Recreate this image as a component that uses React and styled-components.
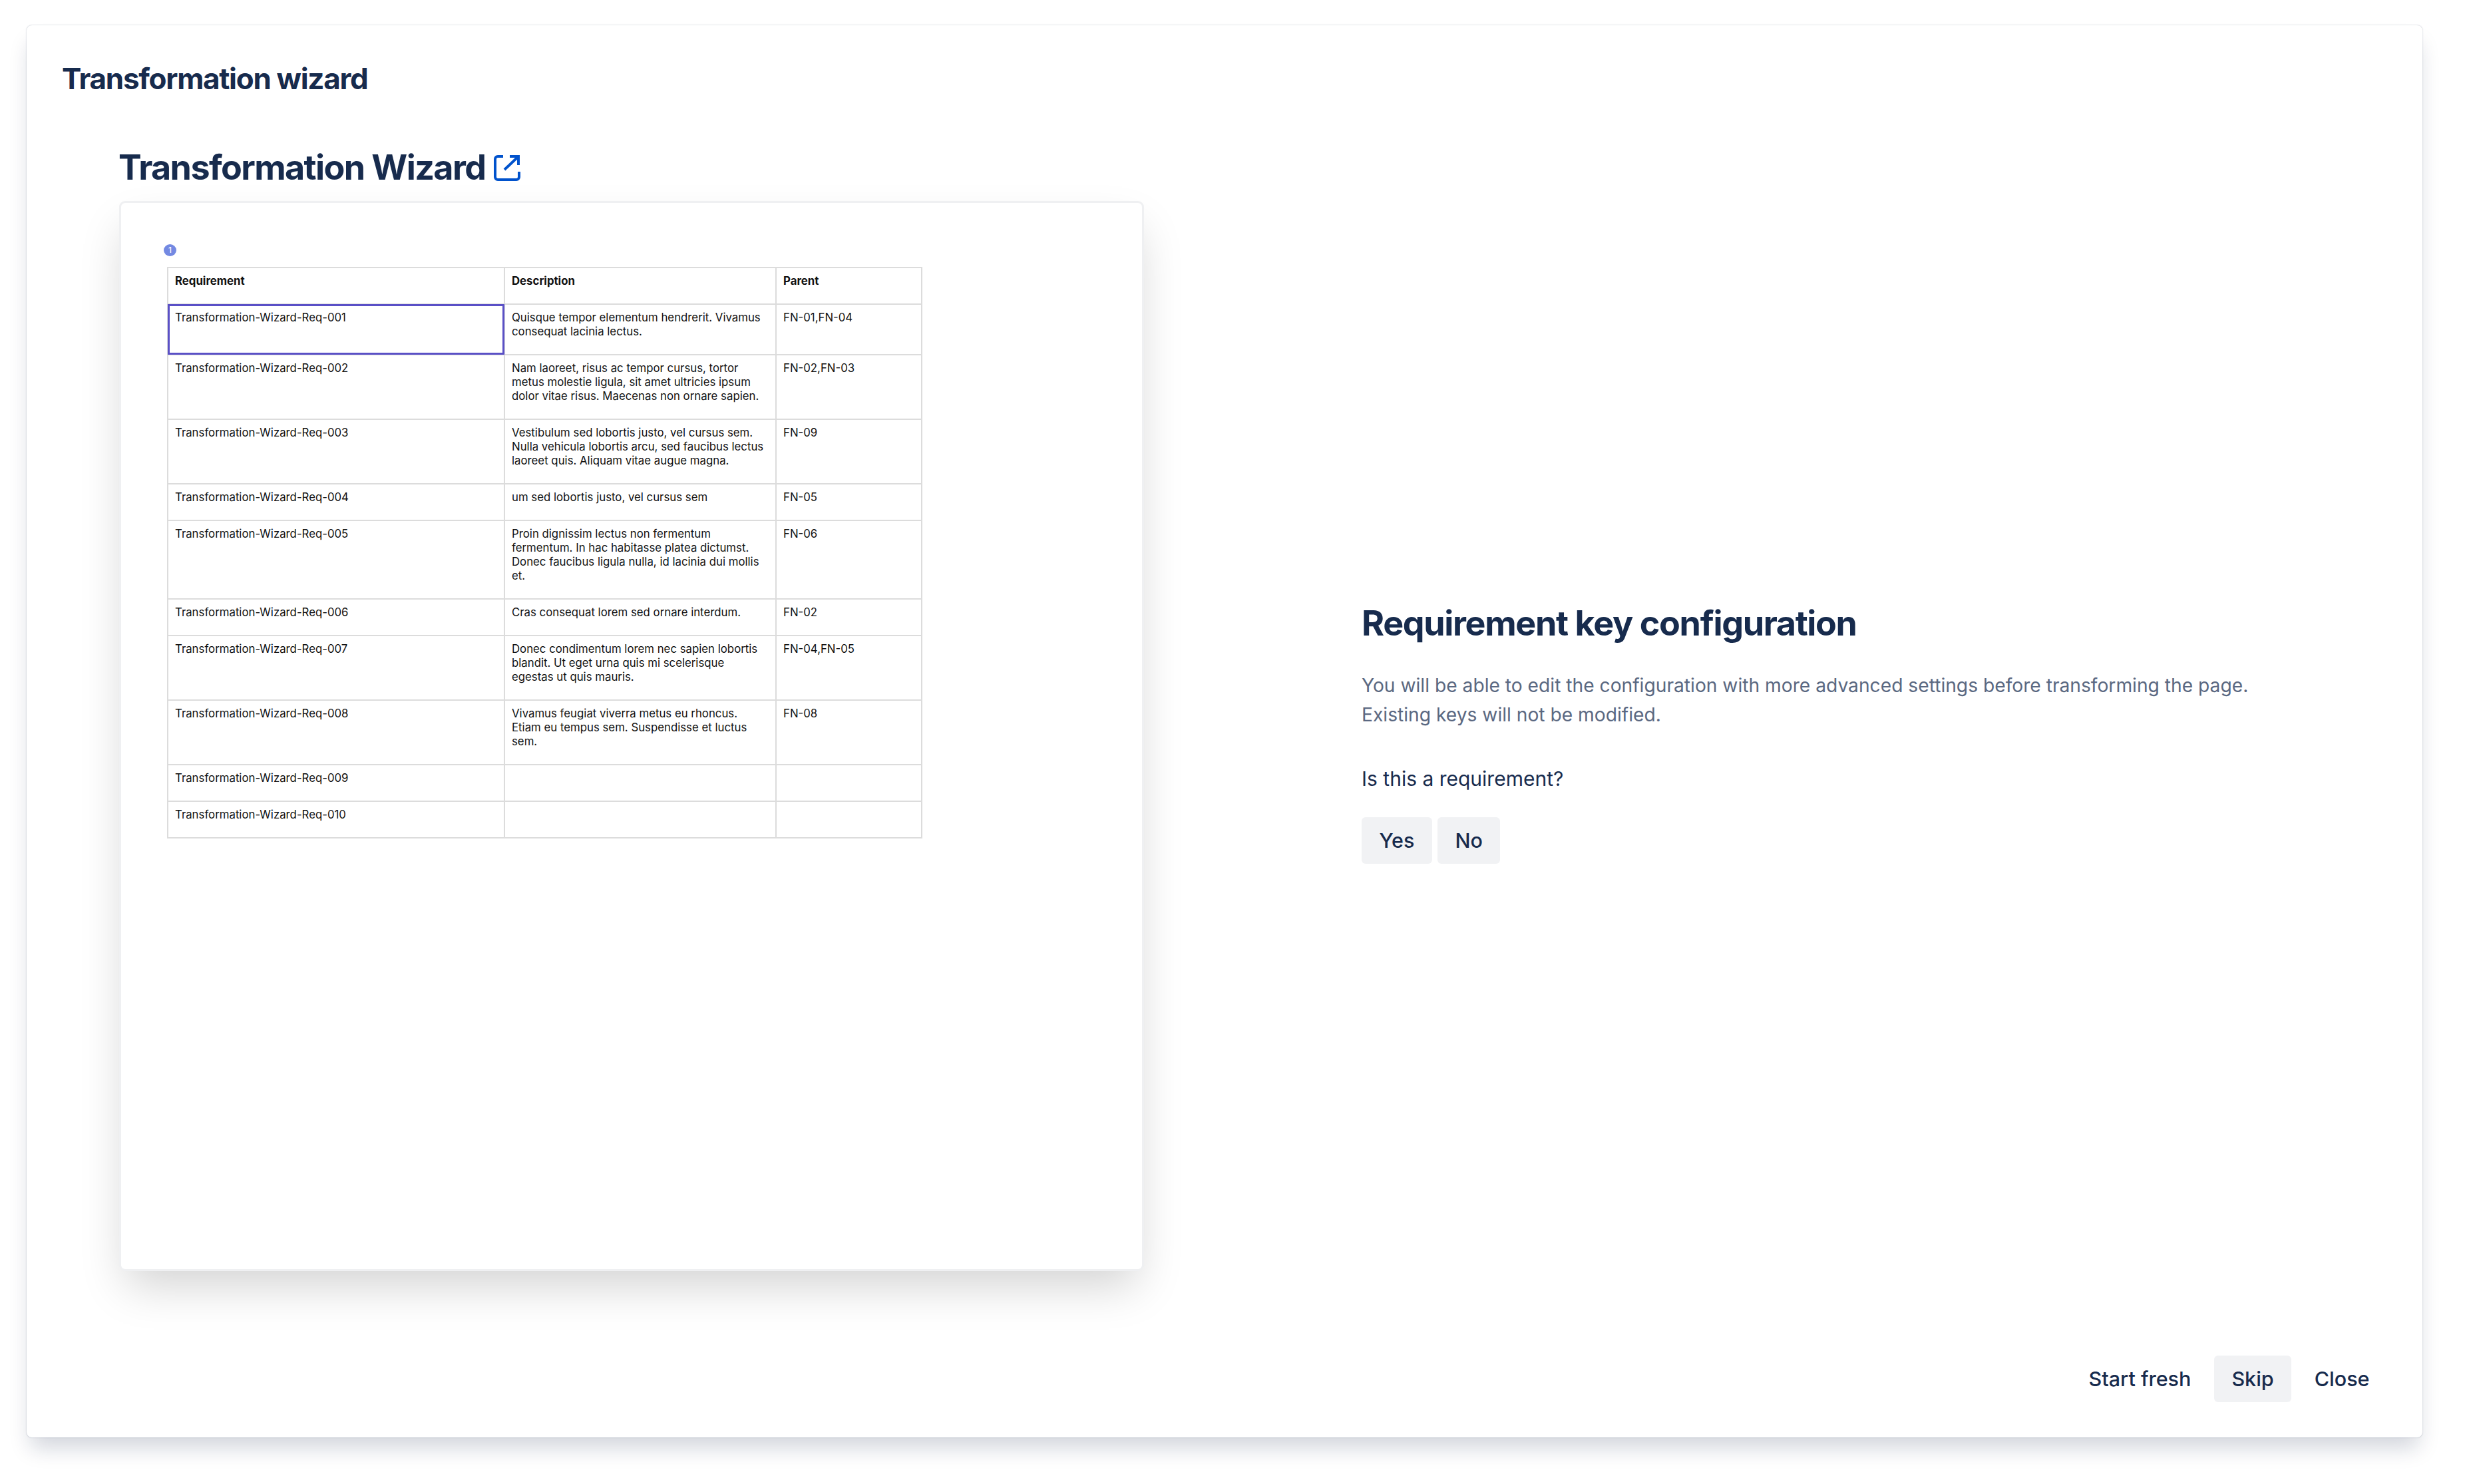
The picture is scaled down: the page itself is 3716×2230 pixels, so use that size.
import React from "react";
import styled, { createGlobalStyle } from "styled-components";

const Global = createGlobalStyle`
  html, body { margin: 0; padding: 0; background: #fff; }
  body { font-family: Inter, "Liberation Sans", sans-serif; color: #172b4d; }
`;

const Page = styled.div`
  width: 3716px;
  height: 2230px;
  padding: 38px 76px 70px 40px;
  box-sizing: border-box;
  overflow: hidden;
`;
const Modal = styled.section`
  width: 3600px;
  height: 2122px;
  box-sizing: border-box;
  background: #fff;
  border-radius: 8px;
  box-shadow: 0 0 2px rgba(9, 30, 66, 0.31), 0 22px 32px -6px rgba(9, 30, 66, 0.18);
  display: flex;
  flex-direction: column;
`;
const ModalTitle = styled.h1`
  margin: 0;
  padding: 54px 0 0 53px;
  height: 130px;
  box-sizing: content-box;
  font-size: 44px;
  line-height: 52px;
  font-weight: 700;
  letter-spacing: -1.3px;
`;
const Body = styled.div`
  flex: 1;
  display: grid;
  grid-template-columns: 2006px 1fr;
  min-height: 0;
`;
const PreviewColumn = styled.div`
  padding: 0 0 0 138px;
`;
const PreviewTitle = styled.h2`
  margin: 0 0 23px;
  height: 60px;
  display: flex;
  align-items: center;
  gap: 13px;
  font-size: 52px;
  line-height: 60px;
  font-weight: 700;
  letter-spacing: -1.6px;
`;
const Card = styled.div`
  width: 1534px;
  height: 1602px;
  margin-left: 4px;
  box-sizing: border-box;
  background: #fff;
  border-radius: 6px;
  padding: 62px 0 0 64px;
  box-shadow: 0 0 0 3px #eff0f2, 0 32px 64px -8px rgba(0, 0, 0, 0.18);
`;
const Badge = styled.div`
  width: 19px;
  height: 18px;
  margin-bottom: 16px;
  border-radius: 50%;
  background: #7389e2;
  color: #fff;
  font-size: 12px;
  line-height: 18px;
  text-align: center;
  font-weight: 500;
`;
const Sheet = styled.table`
  margin-left: 5px;
  width: 1133px;
  table-layout: fixed;
  border-collapse: collapse;
  font-size: 16.8px;
  line-height: 21px;
  color: #111;
`;
const HeadCell = styled.th`
  border: 2px solid #dcdcdc;
  padding: 9px 10px 23px;
  text-align: left;
  font-weight: 700;
  vertical-align: top;
`;
const Cell = styled.td`
  border: 2px solid #dcdcdc;
  padding: 9px 10px 23px;
  vertical-align: top;
  ${(p) => p.$selected && `outline: 3px solid #5a50c6; outline-offset: -3px;`}
`;
const ConfigColumn = styled.div`
  padding: 685px 0 0 0;
`;
const ConfigTitle = styled.h2`
  margin: 0;
  font-size: 52px;
  line-height: 60px;
  font-weight: 700;
  letter-spacing: -1.35px;
`;
const ConfigText = styled.p`
  margin: 42px 0 0;
  font-size: 28.2px;
  line-height: 43.5px;
  color: #5a6881;
`;
const Question = styled.p`
  margin: 52px 0 0;
  font-size: 30px;
  line-height: 44px;
`;
const Choices = styled.div`
  margin-top: 36px;
  display: flex;
  gap: 8px;
`;
const Button = styled.button`
  height: 70px;
  padding: 0 26.5px;
  border: 0;
  border-radius: 6px;
  background: ${(p) => (p.$subtle ? "transparent" : "#f1f2f4")};
  color: #172b4d;
  font: 500 30.5px/70px Inter, "Liberation Sans", sans-serif;
`;
const Footer = styled.footer`
  display: flex;
  justify-content: flex-end;
  gap: 8px;
  padding: 0 53px 53px 0;
`;

const ExternalIcon = () => (
  <svg width="40" height="39" viewBox="0 0 40 39" fill="none" stroke="#0052cc" strokeWidth="4">
    <path d="M14 2H6a4 4 0 0 0-4 4v27a4 4 0 0 0 4 4h28a4 4 0 0 0 4-4v-8" />
    <path d="M16 22L36 3M24 2h13v13" />
  </svg>
);

const rows = [
  ["Transformation-Wizard-Req-001", "Quisque tempor elementum hendrerit. Vivamus consequat lacinia lectus.", "FN-01,FN-04"],
  ["Transformation-Wizard-Req-002", "Nam laoreet, risus ac tempor cursus, tortor metus molestie ligula, sit amet ultricies ipsum dolor vitae risus. Maecenas non ornare sapien.", "FN-02,FN-03"],
  ["Transformation-Wizard-Req-003", "Vestibulum sed lobortis justo, vel cursus sem. Nulla vehicula lobortis arcu, sed faucibus lectus laoreet quis. Aliquam vitae augue magna.", "FN-09"],
  ["Transformation-Wizard-Req-004", "um sed lobortis justo, vel cursus sem", "FN-05"],
  ["Transformation-Wizard-Req-005", "Proin dignissim lectus non fermentum fermentum. In hac habitasse platea dictumst. Donec faucibus ligula nulla, id lacinia dui mollis et.", "FN-06"],
  ["Transformation-Wizard-Req-006", "Cras consequat lorem sed ornare interdum.", "FN-02"],
  ["Transformation-Wizard-Req-007", "Donec condimentum lorem nec sapien lobortis blandit. Ut eget urna quis mi scelerisque egestas ut quis mauris.", "FN-04,FN-05"],
  ["Transformation-Wizard-Req-008", "Vivamus feugiat viverra metus eu rhoncus. Etiam eu tempus sem. Suspendisse et luctus sem.", "FN-08"],
  ["Transformation-Wizard-Req-009", "", ""],
  ["Transformation-Wizard-Req-010", "", ""],
];

export default function App() {
  return (
    <Page>
      <Global />
      <Modal>
        <ModalTitle>Transformation wizard</ModalTitle>
        <Body>
          <PreviewColumn>
            <PreviewTitle>
              Transformation Wizard <ExternalIcon />
            </PreviewTitle>
            <Card>
              <Badge>1</Badge>
              <Sheet>
                <colgroup>
                  <col style={{ width: 506 }} />
                  <col style={{ width: 408 }} />
                  <col style={{ width: 219 }} />
                </colgroup>
                <thead>
                  <tr>
                    <HeadCell>Requirement</HeadCell>
                    <HeadCell>Description</HeadCell>
                    <HeadCell>Parent</HeadCell>
                  </tr>
                </thead>
                <tbody>
                  {rows.map(([a, b, c], i) => (
                    <tr key={a}>
                      <Cell $selected={i === 0}>{a}</Cell>
                      <Cell>{b}</Cell>
                      <Cell>{c}</Cell>
                    </tr>
                  ))}
                </tbody>
              </Sheet>
            </Card>
          </PreviewColumn>
          <ConfigColumn>
            <ConfigTitle>Requirement key configuration</ConfigTitle>
            <ConfigText>
              You will be able to edit the configuration with more advanced settings before transforming the page.
              <br />
              Existing keys will not be modified.
            </ConfigText>
            <Question>Is this a requirement?</Question>
            <Choices>
              <Button>Yes</Button>
              <Button>No</Button>
            </Choices>
          </ConfigColumn>
        </Body>
        <Footer>
          <Button $subtle>Start fresh</Button>
          <Button>Skip</Button>
          <Button $subtle>Close</Button>
        </Footer>
      </Modal>
    </Page>
  );
}
